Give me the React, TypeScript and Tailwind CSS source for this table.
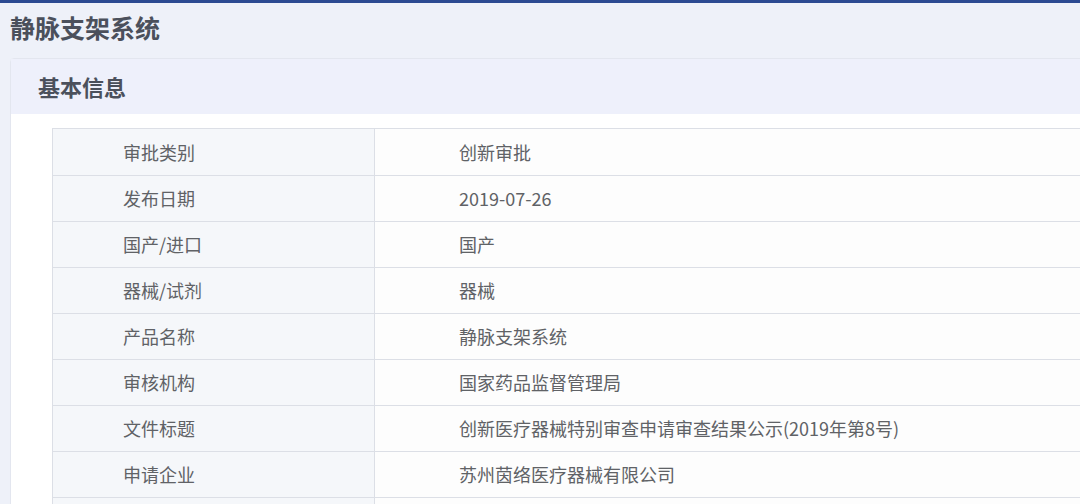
import React from "react";

const rows: [string, string][] = [
  ["审批类别", "创新审批"],
  ["发布日期", "2019-07-26"],
  ["国产/进口", "国产"],
  ["器械/试剂", "器械"],
  ["产品名称", "静脉支架系统"],
  ["审核机构", "国家药品监督管理局"],
  ["文件标题", "创新医疗器械特别审查申请审查结果公示(2019年第8号)"],
  ["申请企业", "苏州茵络医疗器械有限公司"],
  ["", ""],
];

export default function App() {
  return (
    <div
      className="h-[504px] w-[1080px] overflow-hidden bg-[#eef1f9] text-[#606266]"
      style={{ fontFamily: '"Microsoft YaHei", "Noto Sans CJK SC", "Noto Sans", sans-serif' }}
    >
      <div className="h-[3px] bg-[#2c4a92]" />
      <h1 className="pl-[10px] pt-[7px] h-[55px] text-[25px] font-bold leading-[34px] text-[#4b505c]">
        静脉支架系统
      </h1>
      <div className="ml-[10px] mr-[-20px] rounded-tl-[4px] border border-[#e3e6ef] bg-white">
        <div className="flex h-[55px] items-center bg-[#eef0fb] pl-[27px] text-[22px] font-bold text-[#4b505c]">
          基本信息
        </div>
        <div className="pl-[41px] pt-[14px]">
          <div className="border-l border-t border-[#dcdfe6]">
            {rows.map(([label, value], i) => (
              <div
                key={i}
                className={`flex border-b border-[#dcdfe6] text-[18px] ${i === 0 ? "h-[47px]" : "h-[46px]"}`}
              >
                <div className="flex w-[322px] shrink-0 items-center border-r border-[#dcdfe6] bg-[#f5f7fa] pl-[70px]">
                  {label}
                </div>
                <div className="flex flex-1 items-center bg-[#fdfdfd] pl-[84px]">{value}</div>
              </div>
            ))}
          </div>
        </div>
      </div>
    </div>
  );
}
